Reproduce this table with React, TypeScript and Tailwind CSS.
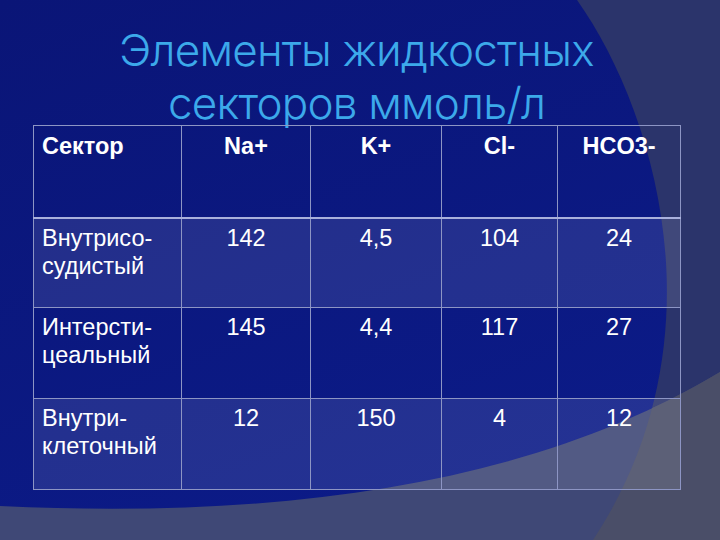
import React from "react";

const header = ["Сектор", "Na+", "K+", "Cl-", "HCO3-"];

const rows: { label: string[]; values: string[]; h: string; band: boolean }[] = [
  { label: ["Внутрисо-", "судистый"], values: ["142", "4,5", "104", "24"], h: "h-[90px]", band: true },
  { label: ["Интерсти-", "цеальный"], values: ["145", "4,4", "117", "27"], h: "h-[91px]", band: false },
  { label: ["Внутри-", "клеточный"], values: ["12", "150", "4", "12"], h: "h-[91px]", band: true },
];

function Backdrop() {
  return (
    <svg
      className="absolute inset-0 h-full w-full"
      viewBox="0 0 720 540"
      preserveAspectRatio="none"
    >
      <defs>
        <clipPath id="rightSide">
          <path d="M577,0 C655,110 725,340 593,540 L720,540 L720,0 Z" />
        </clipPath>
      </defs>
      <path d="M577,0 C655,110 725,340 593,540 L720,540 L720,0 Z" fill="#2b346b" />
      <path d="M0,506 C300,520 540,480 720,372 L720,540 L0,540 Z" fill="#3f4876" />
      <path
        d="M0,506 C300,520 540,480 720,372 L720,540 L0,540 Z"
        fill="#4a4e68"
        clipPath="url(#rightSide)"
      />
    </svg>
  );
}

export default function App() {
  return (
    <div className="relative h-[540px] w-[720px] overflow-hidden bg-[linear-gradient(160deg,#0a1577,#0c1c8b)]">
      <Backdrop />
      <div className="relative flex flex-col pl-[33px] pt-[24px]">
        <div className="h-[101px] w-[647px]">
          <h1 className="text-center font-['Inter',sans-serif] text-[44px] font-light leading-[53px] tracking-[-0.8px] text-[#3ca9ea]">
            Элементы жидкостных
            <br />
            секторов ммоль/л
          </h1>
        </div>
        <table className="w-[647px] table-fixed border-collapse font-['Liberation_Sans',Arial,sans-serif] text-[23.5px] leading-[28px] text-white">
          <colgroup>
            <col className="w-[148px]" />
            <col className="w-[129px]" />
            <col className="w-[131px]" />
            <col className="w-[116px]" />
            <col className="w-[123px]" />
          </colgroup>
          <thead>
            <tr className="h-[92px] border-b-2 border-b-[#a9b0dc]">
              {header.map((h, i) => (
                <th
                  key={h}
                  className={`border border-[#8d95c4] pt-[6px] align-top font-bold ${
                    i === 0 ? "pl-[8px] text-left" : "text-center"
                  }`}
                >
                  {h}
                </th>
              ))}
            </tr>
          </thead>
          <tbody>
            {rows.map((r) => (
              <tr key={r.label[0]} className={`${r.h} ${r.band ? "bg-white/10" : ""}`}>
                <td className="border border-[#8d95c4] pl-[8px] pt-[5px] align-top">
                  {r.label[0]}
                  <br />
                  {r.label[1]}
                </td>
                {r.values.map((v, i) => (
                  <td
                    key={i}
                    className="border border-[#8d95c4] pt-[5px] text-center align-top"
                  >
                    {v}
                  </td>
                ))}
              </tr>
            ))}
          </tbody>
        </table>
      </div>
    </div>
  );
}
